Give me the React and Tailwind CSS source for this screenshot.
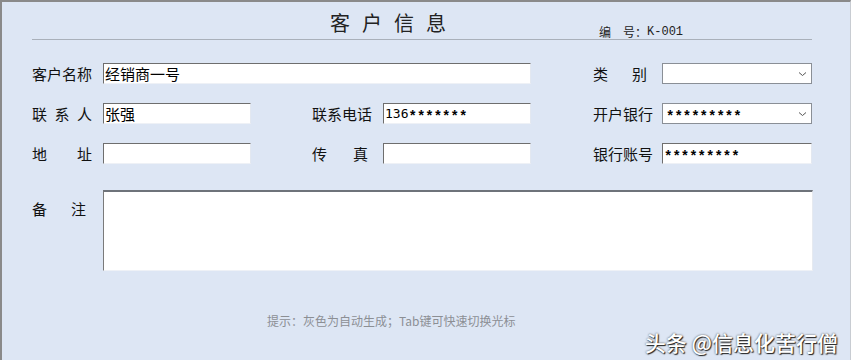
import React from "react";

const sans = "font-['Noto_Sans_CJK_SC','Noto_Sans',sans-serif]";

function Label({ chars, className = "" }) {
  return (
    <div className={`flex w-[60px] shrink-0 justify-between text-[15px] leading-none text-[#111] ${className}`}>
      {chars.map((c, i) => (
        <span key={i}>{c}</span>
      ))}
    </div>
  );
}

// SimSun-style asterisks sit mid-height, so nudge them down
function Masked({ prefix = "", stars }) {
  return (
    <span className="flex items-center font-['Liberation_Mono',monospace] text-[14px] leading-none text-black">
      {prefix && <span className="font-['DejaVu_Sans_Mono',monospace] text-[13px]">{prefix}</span>}
      <span className="translate-y-[3px] font-bold">{stars}</span>
    </span>
  );
}

function Field({ width, children, className = "" }) {
  return (
    <div
      className={`flex h-[21px] shrink-0 items-center overflow-hidden border border-t-[#6e6e6e] border-l-[#6e6e6e] border-r-[#e3e8f0] border-b-[#eef1f6] bg-white pl-[1px] text-[15px] leading-none text-black ${className}`}
      style={{ width }}
    >
      {children}
    </div>
  );
}

function Select({ children }) {
  return (
    <div className="flex h-[21px] w-[150px] shrink-0 items-center justify-between border border-[#8a8f96] bg-white pl-[3px] pr-[4px]">
      {children || <span />}
      <svg width="9" height="6" viewBox="0 0 9 6" className="text-[#555]">
        <path d="M1 1.5 L4.5 4.5 L8 1.5" fill="none" stroke="currentColor" strokeWidth="1" />
      </svg>
    </div>
  );
}

export default function App() {
  return (
    <div className={`relative h-[360px] w-[851px] overflow-hidden border-l-2 border-t-2 border-r border-[#8a8a8a] border-r-[#c8ccd2] bg-[#dde6f4] ${sans}`}>
      {/* header */}
      <div className="ml-[30px] flex h-[38px] w-[780px] items-end border-b border-[#a9b0ba]">
        <div className="mb-[6px] ml-[298px] text-[20px] leading-none tracking-[12px] text-[#222]">客户信息</div>
        <div className="mb-[1px] ml-[141px] flex items-center text-[12px] leading-none text-[#222]">
          <span className="mr-[12px]">编</span>
          <span>号：</span>
          <span className="font-['Liberation_Mono',monospace]">K-001</span>
        </div>
      </div>

      {/* row 1 */}
      <div className="ml-[30px] mt-[23px] flex items-center">
        <Label chars={["客户名称"]} />
        <Field width={428} className="ml-[11px]">经销商一号</Field>
        <Label chars={["类", "别"]} className="ml-[62px] pr-[6px]" />
        <div className="ml-[9px]">
          <Select />
        </div>
      </div>

      {/* row 2 */}
      <div className="ml-[30px] mt-[19px] flex items-center">
        <Label chars={["联", "系", "人"]} />
        <Field width={148} className="ml-[11px]">张强</Field>
        <Label chars={["联系电话"]} className="ml-[61px]" />
        <Field width={148} className="ml-[11px]">
          <Masked prefix="136" stars="*******" />
        </Field>
        <Label chars={["开户银行"]} className="ml-[62px]" />
        <div className="ml-[9px]">
          <Select>
            <Masked stars="*********" />
          </Select>
        </div>
      </div>

      {/* row 3 */}
      <div className="ml-[30px] mt-[19px] flex items-center">
        <Label chars={["地", "址"]} />
        <Field width={148} className="ml-[11px]" />
        <Label chars={["传", "真"]} className="ml-[61px] pr-[4px]" />
        <Field width={148} className="ml-[11px]" />
        <Label chars={["银行账号"]} className="ml-[62px]" />
        <Field width={150} className="ml-[9px]">
          <Masked stars="*********" />
        </Field>
      </div>

      {/* remarks */}
      <div className="ml-[30px] mt-[26px] flex items-start">
        <Label chars={["备", "注"]} className="mt-[11px] pr-[6px]" />
        <div className="ml-[11px] h-[81px] w-[710px] border border-t-2 border-t-[#6e737a] border-l-[#7a7a7a] border-r-[#e6eaf0] border-b-[#eef1f6] bg-white" />
      </div>

      {/* hint */}
      <div className="ml-[265px] mt-[44px] text-[12px] leading-none text-[#8c8f94]">
        提示：灰色为自动生成；Tab键可快速切换光标
      </div>

      {/* watermark */}
      <div className="absolute bottom-[7px] right-[12px] text-[21px] font-medium leading-none text-white [text-shadow:1px_1px_1px_#222,0_0_2px_#444]">
        头条 @信息化苦行僧
      </div>
    </div>
  );
}
